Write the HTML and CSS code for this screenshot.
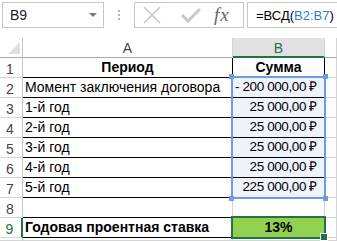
FILE: index.html
```html
<!DOCTYPE html>
<html lang="ru">
<head>
  <meta charset="UTF-8">
  <title>ВСД</title>
  <link rel="stylesheet" href="styles.css">
</head>
<body>
  <div class="formula-bar">
    <div class="name-box">
      <span>B9</span>
      <span class="arrow"></span>
    </div>
    <div class="grip"><i></i><i></i><i></i></div>
    <div class="fx-box">
      <svg class="icon-x" width="18" height="18" viewBox="0 0 18 18">
        <path d="M1 1 L17 17 M17 1 L1 17" stroke="#c8c8c8" stroke-width="1.6" fill="none"/>
      </svg>
      <svg class="icon-ok" width="20" height="16" viewBox="0 0 20 16">
        <path d="M1 8 L7 14 L19 2" stroke="#c8c8c8" stroke-width="3" fill="none"/>
      </svg>
      <span class="fx">fx</span>
    </div>
    <div class="formula">=ВСД(<span class="range">B2:B7</span>)</div>
  </div>

  <div class="sheet-wrap">
    <div class="sheet">
      <div class="corner"><span class="tri"></span></div>
      <div class="col-head">A</div>
      <div class="col-head active">B</div>
      <div class="col-head rest"></div>

      <div class="row-head">1</div>
      <div class="cell t center bold">Период</div>
      <div class="cell t center bold">Сумма</div>
      <div class="cell"></div>

      <div class="row-head">2</div>
      <div class="cell t">Момент заключения договора</div>
      <div class="cell t num ref">- 200 000,00 ₽</div>
      <div class="cell"></div>

      <div class="row-head">3</div>
      <div class="cell t">1-й год</div>
      <div class="cell t num ref">25 000,00 ₽</div>
      <div class="cell"></div>

      <div class="row-head">4</div>
      <div class="cell t">2-й год</div>
      <div class="cell t num ref">25 000,00 ₽</div>
      <div class="cell"></div>

      <div class="row-head">5</div>
      <div class="cell t">3-й год</div>
      <div class="cell t num ref">25 000,00 ₽</div>
      <div class="cell"></div>

      <div class="row-head">6</div>
      <div class="cell t">4-й год</div>
      <div class="cell t num ref">25 000,00 ₽</div>
      <div class="cell"></div>

      <div class="row-head">7</div>
      <div class="cell t">5-й год</div>
      <div class="cell t num ref">225 000,00 ₽</div>
      <div class="cell"></div>

      <div class="row-head">8</div>
      <div class="cell under"></div>
      <div class="cell under"></div>
      <div class="cell"></div>

      <div class="row-head active">9</div>
      <div class="cell t bold">Годовая проентная ставка</div>
      <div class="cell t center bold green">13%</div>
      <div class="cell"></div>

      <div class="row-head"></div>
      <div class="cell"></div>
      <div class="cell"></div>
      <div class="cell"></div>
    </div>

    <div class="overlay">
      <div class="ref-frame">
        <span class="h tl"></span><span class="h tr"></span>
        <span class="h bl"></span><span class="h br"></span>
      </div>
      <div class="sel-frame"><span class="fill-handle"></span></div>
    </div>
  </div>
</body>
</html>
```

FILE: styles.css
```css
body {
  margin: 0;
  background: #fff;
  font-family: "Liberation Sans", Arial, sans-serif;
  color: #000;
  width: 337px;
  height: 241px;
  overflow: hidden;
}

/* formula bar */

.formula-bar {
  display: flex;
  align-items: stretch;
  height: 26px;
  margin: 2px 0 10px 2px;
}

.name-box {
  width: 102px;
  box-sizing: border-box;
  border: 1px solid #c6c6c6;
  display: flex;
  align-items: center;
  justify-content: space-between;
  padding: 0 6px 0 7px;
  font-size: 14px;
  color: #222;
}

.arrow {
  width: 0;
  height: 0;
  border-left: 4px solid transparent;
  border-right: 4px solid transparent;
  border-top: 4px solid #777;
}

.grip {
  width: 30px;
  display: flex;
  flex-direction: column;
  align-items: center;
  justify-content: center;
  gap: 2px;
}

.grip i {
  width: 2px;
  height: 2px;
  background: #b5b5b5;
}

.fx-box {
  width: 110px;
  box-sizing: border-box;
  border: 1px solid #c6c6c6;
  display: flex;
  align-items: center;
  padding-left: 8px;
}

.icon-x {
  margin-right: 20px;
}

.icon-ok {
  margin-right: 13px;
}

.fx {
  font-family: "Liberation Serif", serif;
  font-style: italic;
  font-size: 19px;
  color: #666;
  letter-spacing: 1px;
}

.formula {
  flex: 1;
  margin-left: 3px;
  border: 1px solid #c6c6c6;
  border-right: none;
  display: flex;
  align-items: center;
  padding-left: 8px;
  font-size: 13px;
  white-space: nowrap;
  overflow: hidden;
}

.range {
  color: #3c78d8;
}

/* sheet */

.sheet-wrap {
  position: relative;
  height: 203px;
  overflow: hidden;
}

.sheet,
.overlay {
  display: grid;
  grid-template-columns: 23px 210px 92px 1fr;
  grid-template-rows: repeat(10, 20px) 1fr;
  height: 203px;
}

.sheet {
  font-size: 14px;
}

.overlay {
  position: absolute;
  inset: 0;
  pointer-events: none;
}

.sheet > div {
  box-sizing: border-box;
}

.corner,
.col-head,
.row-head {
  display: flex;
  align-items: center;
  justify-content: center;
  color: #444;
  border-right: 1px solid #c6c6c6;
  border-bottom: 1px solid #ababab;
}

.corner {
  position: relative;
}

.tri {
  position: absolute;
  right: 2px;
  bottom: 3px;
  width: 0;
  height: 0;
  border-left: 12px solid transparent;
  border-bottom: 12px solid #dfdfdf;
}

.col-head {
  border-right-color: #d4d4d4;
  padding-top: 1px;
}

.col-head.active {
  background: #e1e1e1;
  color: #217346;
  border-bottom: 2px solid #217346;
}

.row-head {
  border-bottom-color: #d4d4d4;
  padding: 2px 2px 0 0;
}

.row-head.active {
  color: #217346;
  border-right: 2px solid #217346;
}

.cell {
  border-right: 1px solid #d4d4d4;
  border-bottom: 1px solid #d4d4d4;
  display: flex;
  align-items: flex-end;
  padding: 0 2px 2px;
  white-space: nowrap;
  overflow: hidden;
}

.cell.t {
  border-right-color: #000;
  border-bottom-color: #000;
}

.cell.under {
  border-bottom-color: #000;
}

.center {
  justify-content: center;
}

.bold {
  font-weight: bold;
}

.num {
  justify-content: flex-end;
  padding-right: 7px;
  font-size: 13.5px;
  letter-spacing: -0.4px;
}

.ref {
  background: #eef3fc;
}

.green {
  background: #92d050;
}

/* overlays: reference range and active cell */

.ref-frame {
  grid-column: 3;
  grid-row: 3 / 9;
  margin: -2px -1px -1px -2px;
  border: 2px solid #6e9ae6;
  position: relative;
}

.h {
  position: absolute;
  width: 5px;
  height: 5px;
  background: #6e9ae6;
}

.tl { left: -4px; top: -4px; }
.tr { right: -4px; top: -4px; }
.bl { left: -4px; bottom: -4px; }
.br { right: -4px; bottom: -4px; }

.sel-frame {
  grid-column: 3;
  grid-row: 10;
  margin: -2px -1px -1px -2px;
  border: 2px solid #217346;
  position: relative;
}

.fill-handle {
  position: absolute;
  right: -4px;
  bottom: -4px;
  width: 6px;
  height: 6px;
  background: #217346;
  border: 1px solid #fff;
}
```
